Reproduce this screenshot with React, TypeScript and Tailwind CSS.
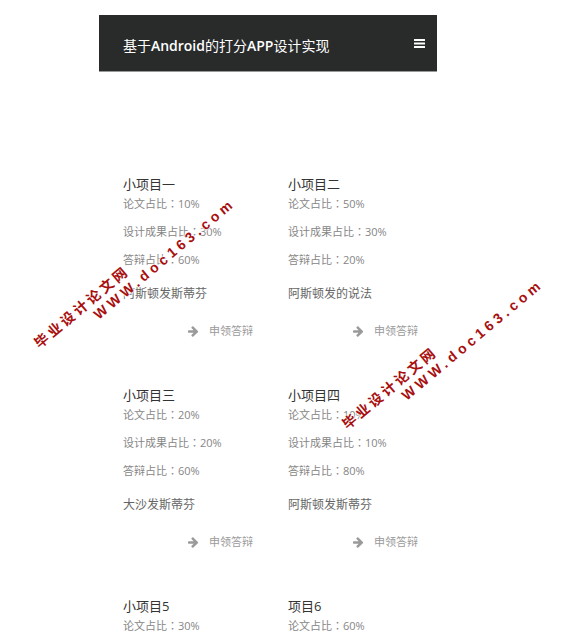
type Project = {
  name: string;
  paper: string;
  design?: string;
  defense?: string;
  description?: string;
};

const projects: Project[] = [
  { name: '小项目一', paper: '10%', design: '30%', defense: '60%', description: '阿斯顿发斯蒂芬' },
  { name: '小项目二', paper: '50%', design: '30%', defense: '20%', description: '阿斯顿发的说法' },
  { name: '小项目三', paper: '20%', design: '20%', defense: '60%', description: '大沙发斯蒂芬' },
  { name: '小项目四', paper: '10%', design: '10%', defense: '80%', description: '阿斯顿发斯蒂芬' },
  { name: '小项目5', paper: '30%' },
  { name: '项目6', paper: '60%' },
];

function BarsIcon() {
  return (
    <svg viewBox="0 0 11 9" className="h-[9px] w-[11px]" fill="currentColor" aria-hidden="true">
      <rect width="11" height="2" rx="0.3" />
      <rect y="3.5" width="11" height="2" rx="0.3" />
      <rect y="7" width="11" height="2" rx="0.3" />
    </svg>
  );
}

function ArrowIcon() {
  return (
    <svg viewBox="0 0 1600 1472" className="size-[11px]" fill="currentColor" aria-hidden="true">
      <path d="M1472 736q0 54-37 91l-651 651q-39 37-91 37-51 0-90-37l-75-75q-38-38-38-91t38-91l293-293H117q-52 0-84.500-37.500T0 800V672q0-53 32.500-90.500T117 544h704L528 250q-38-36-38-90t38-90l75-75q38-38 90-38 53 0 91 38l651 651q37 35 37 90z" />
    </svg>
  );
}

function Ratio({ label, value }: { label: string; value: string }) {
  return (
    <p className="font-['Open_Sans','Noto_Sans_CJK_TC',sans-serif] text-[11px] leading-4 text-[#868686]">
      {`${label}：${value}`}
    </p>
  );
}

function ProjectCard({ project }: { project: Project }) {
  return (
    <article>
      <h2 className="text-[13px] leading-5 text-[#333]">{project.name}</h2>
      <div className="flex flex-col gap-3 pt-0.5">
        <Ratio label="论文占比" value={project.paper} />
        {project.design && <Ratio label="设计成果占比" value={project.design} />}
        {project.defense && <Ratio label="答辩占比" value={project.defense} />}
      </div>
      {project.description && (
        <>
          <p className="mt-4 text-xs leading-5 text-[#666]">{project.description}</p>
          <a href="#apply" className="mt-[19px] ml-[65px] flex items-center gap-2.5 text-[11px] leading-4 text-[#9a9a9a]">
            <ArrowIcon />
            申领答辩
          </a>
        </>
      )}
    </article>
  );
}

function Watermark({ className }: { className: string }) {
  return (
    <div
      aria-hidden="true"
      className={`pointer-events-none absolute w-[200px] -rotate-40 font-['Liberation_Sans','Noto_Sans_CJK_SC',sans-serif] text-sm leading-4 font-bold whitespace-nowrap text-[#a80f0f] [text-shadow:0_0_2px_#fff,0_0_2px_#fff,0_0_2px_#fff,0_0_3px_#fff] ${className}`}
    >
      <div className="tracking-[3px]">毕业设计论文网</div>
      <div className="pl-16 tracking-[4px]">WWW.doc163.com</div>
    </div>
  );
}

export default function App() {
  return (
    <div className="relative min-h-screen overflow-hidden bg-white font-['Open_Sans','Noto_Sans_CJK_SC',sans-serif]">
      <div className="ml-[17.2%] w-[58.8%] pt-[15px]">
        <header className="flex h-[57px] items-center justify-between border-b border-[#999] bg-[#292b2b] pr-3 pl-6 text-white">
          <h1 className="pt-1.5 text-sm">
            基于<span className="font-semibold">Android</span>的打分<span className="font-semibold">APP</span>设计实现
          </h1>
          <button type="button" aria-label="菜单">
            <BarsIcon />
          </button>
        </header>
        <main className="-mr-4 grid grid-cols-2 gap-y-[46px] pt-[102px] pl-6">
          {projects.map((project) => (
            <ProjectCard key={project.name} project={project} />
          ))}
        </main>
      </div>
      <Watermark className="top-[271px] left-[18px]" />
      <Watermark className="top-[352px] left-[326px]" />
    </div>
  );
}
